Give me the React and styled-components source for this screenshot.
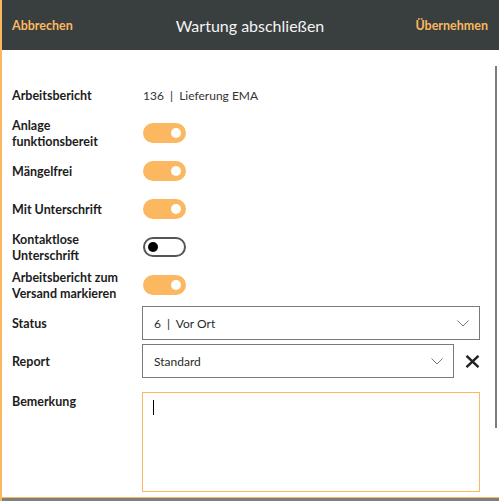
import React from "react";
import styled, { createGlobalStyle } from "styled-components";

const ORANGE = "#fbb860";
const FONT = `"Lato", "Noto Sans", sans-serif`;

const Global = createGlobalStyle`
  html, body { margin: 0; padding: 0; background: #fff; }
  body { font-family: ${FONT}; }
  * { box-sizing: border-box; }
`;

const Frame = styled.div`
  width: 499px;
  height: 501px;
  display: flex;
  flex-direction: column;
  border-left: 2px solid ${ORANGE};
  background: #fff;
  overflow: hidden;
`;

const Header = styled.header`
  height: 50px;
  flex: none;
  background: #393e3f;
  display: grid;
  grid-template-columns: 1fr auto 1fr;
  align-items: center;
  padding: 0 11px 0 10px;
`;

const HeaderAction = styled.button`
  border: none;
  background: none;
  padding: 0;
  font: 700 12.5px ${FONT};
  color: ${ORANGE};
  justify-self: ${(p) => (p.$right ? "end" : "start")};
  cursor: pointer;
`;

const Title = styled.h1`
  margin: 0;
  font: 400 16px ${FONT};
  color: #f4f4f4;
`;

const Body = styled.main`
  flex: 1;
  position: relative;
  padding: 26px 10px 0 10px;
`;

const Scrollbar = styled.div`
  position: absolute;
  right: 2px;
  top: 16px;
  width: 2px;
  height: 362px;
  background: #7d7d7d;
`;

const Row = styled.div`
  display: grid;
  grid-template-columns: 130px 1fr;
  align-items: ${(p) => (p.$top ? "start" : "center")};
  height: ${(p) => p.$h || 38}px;
  margin-top: ${(p) => p.$mt || 0}px;
`;

const Label = styled.div`
  font: 700 12.5px/16px ${FONT};
  color: #1c1c1c;
  padding-top: ${(p) => p.$pt ?? 2}px;
`;

const Value = styled.div`
  font: 400 12px/16px ${FONT};
  color: #333;
  padding: 2px 0 0 1px;
`;

const Track = styled.div`
  width: 43px;
  height: 20px;
  border-radius: 10px;
  position: relative;
  margin-left: 1px;
  background: ${(p) => (p.$on ? ORANGE : "#fff")};
  border: 2px solid ${(p) => (p.$on ? ORANGE : "#555")};
`;

const Knob = styled.span`
  position: absolute;
  top: 50%;
  width: 10px;
  height: 10px;
  margin-top: -5px;
  border-radius: 50%;
  background: ${(p) => (p.$on ? "#fff" : "#000")};
  ${(p) => (p.$on ? "right: 3px;" : "left: 3px;")}
`;

const Toggle = ({ on }) => (
  <Track $on={on}>
    <Knob $on={on} />
  </Track>
);

const FieldLine = styled.div`
  display: flex;
  align-items: center;
  gap: 11px;
`;

const Select = styled.div`
  flex: ${(p) => (p.$w ? "none" : "1")};
  width: ${(p) => (p.$w ? `${p.$w}px` : "auto")};
  height: 34px;
  border: 1px solid #7a7a7a;
  display: flex;
  align-items: center;
  justify-content: space-between;
  padding: 0 10px 0 11px;
  font: 400 12px ${FONT};
  color: #2a2a2a;
  margin-right: ${(p) => (p.$w ? 0 : 9)}px;
`;

const Chevron = () => (
  <svg width="12" height="7" viewBox="0 0 12 7" fill="none">
    <path d="M0.5 0.5 L6 6 L11.5 0.5" stroke="#777" strokeWidth="1" />
  </svg>
);

const Clear = styled.button`
  border: none;
  background: none;
  padding: 0;
  display: flex;
  margin-right: 10px;
  cursor: pointer;
`;

const Cross = () => (
  <svg width="15" height="13" viewBox="0 0 15 13">
    <path d="M1.5 0.8 L13.5 12.2 M13.5 0.8 L1.5 12.2" stroke="#222" strokeWidth="2.4" />
  </svg>
);

const TextArea = styled.div`
  height: 100px;
  border: 1px solid ${ORANGE};
  margin-right: 9px;
  padding: 7px 10px;
`;

const Caret = styled.span`
  display: block;
  width: 1px;
  height: 15px;
  background: #000;
`;

const Footer = styled.footer`
  flex: none;
  height: 4px;
  border-top: 1px solid ${ORANGE};
  background: #7f7f7f;
`;

export default function App() {
  return (
    <>
      <Global />
      <Frame>
        <Header>
          <HeaderAction>Abbrechen</HeaderAction>
          <Title>Wartung abschließen</Title>
          <HeaderAction $right>Übernehmen</HeaderAction>
        </Header>
        <Body>
          <Scrollbar />
          <Row>
            <Label>Arbeitsbericht</Label>
            <Value>136&nbsp; | &nbsp;Lieferung EMA</Value>
          </Row>
          <Row>
            <Label>
              Anlage
              <br />
              funktionsbereit
            </Label>
            <Toggle on />
          </Row>
          <Row>
            <Label>Mängelfrei</Label>
            <Toggle on />
          </Row>
          <Row>
            <Label>Mit Unterschrift</Label>
            <Toggle on />
          </Row>
          <Row>
            <Label>
              Kontaktlose
              <br />
              Unterschrift
            </Label>
            <Toggle on={false} />
          </Row>
          <Row>
            <Label>
              Arbeitsbericht zum
              <br />
              Versand markieren
            </Label>
            <Toggle on />
          </Row>
          <Row>
            <Label>Status</Label>
            <FieldLine>
              <Select>
                <span>6&nbsp; | &nbsp;Vor Ort</span>
                <Chevron />
              </Select>
            </FieldLine>
          </Row>
          <Row>
            <Label>Report</Label>
            <FieldLine>
              <Select $w={312}>
                <span>Standard</span>
                <Chevron />
              </Select>
              <Clear aria-label="Entfernen">
                <Cross />
              </Clear>
            </FieldLine>
          </Row>
          <Row $top $h={99} $mt={12}>
            <Label $pt={2}>Bemerkung</Label>
            <TextArea>
              <Caret />
            </TextArea>
          </Row>
        </Body>
        <Footer />
      </Frame>
    </>
  );
}
